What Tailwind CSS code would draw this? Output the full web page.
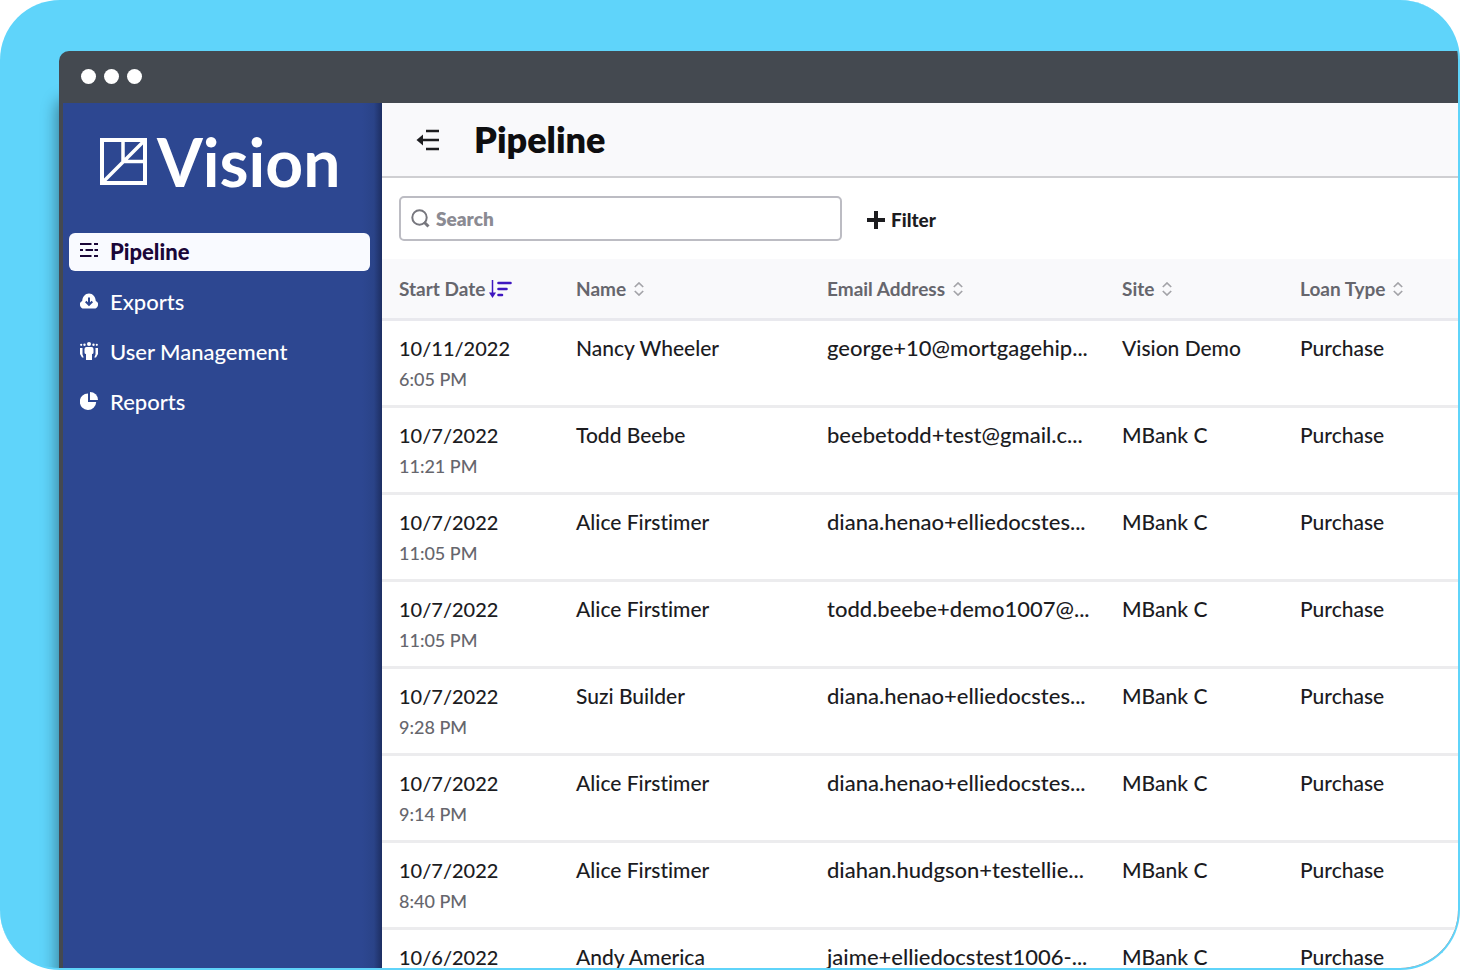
<!DOCTYPE html>
<html lang="en">
<head>
    <meta charset="UTF-8">
    <meta name="viewport" content="width=device-width, initial-scale=1.0">
    <title>Vision - Pipeline</title>

    <!-- Tailwind CSS -->
    <script src="https://cdn.jsdelivr.net/npm/@tailwindcss/browser@4"></script>
</head>
<body class="bg-white font-['Lato',sans-serif] font-medium text-[#1c1c1f] [font-variant-ligatures:none]">
    <div class="h-screen overflow-hidden rounded-[60px] border-r-2 border-b-2 border-[#5fd4fa] bg-[#5fd4fa] pt-[51px] pl-[59px]">
        <!-- Browser window -->
        <div class="h-full rounded-tl-[10px] shadow-[-2px_48px_16px_rgba(0,0,0,0.4)]">
            <div class="flex h-full flex-col overflow-hidden rounded-tl-[10px] bg-[#444950]">
                <div class="flex h-[52px] shrink-0 items-center gap-2 pb-[2px] pl-[22px]">
                    <span class="size-[15px] rounded-full bg-white"></span>
                    <span class="size-[15px] rounded-full bg-white"></span>
                    <span class="size-[15px] rounded-full bg-white"></span>
                </div>

                <div class="flex min-h-0 flex-1 pl-1">
                    <!-- Sidebar -->
                    <aside class="w-[319px] shrink-0 bg-linear-to-l from-[#1d2e62] via-[#2a4388] via-[8px] to-[#2d4791] to-[20px] pr-3 pl-[6px] text-white">
                        <div class="flex h-[130px] items-center gap-[10px] pb-[13px] pl-[31px]">
                            <svg class="size-[47px] shrink-0" viewBox="0 0 47 47" fill="none" stroke="currentColor" stroke-width="3.500">
                                <rect x="2" y="2" width="43" height="43" stroke-width="4" />
                                <path d="M3 44L44 3M23 3v20M23 23.500h21" />
                            </svg>
                            <span class="text-[66px] leading-[64px] font-bold">Vision</span>
                        </div>
                        <nav class="flex flex-col gap-3 text-[22px]">
                            <a href="#" class="flex h-[38px] items-center gap-3 rounded-[6px] bg-[#f9faff] pb-[2px] pl-[11px] font-black text-[#1a0638]">
                                <svg class="size-[18px]" viewBox="0 0 18 18" fill="none" stroke="currentColor" stroke-width="2">
                                    <path d="M0 2h11.500M14 2h4M0 8h3M5.500 8h7.500M14.500 8h3.500M0 14h11.500M14 14h4" />
                                </svg>
                                Pipeline
                            </a>
                            <a href="#" class="flex h-[38px] items-center gap-3 pb-[2px] pl-[11px]">
                                <svg class="size-[18px]" viewBox="0 0 18 18">
                                    <path fill="currentColor" d="M4 16.500a4 4 0 0 1-1.800-7.600C2.500 4.800 5.200 1.500 9 1.500s6.500 3.300 6.800 7.400A4 4 0 0 1 14 16.500z" />
                                    <path stroke="#2d4791" stroke-width="2" fill="none" d="M9 5.500v7M5.700 9.500L9 12.800l3.300-3.300" />
                                </svg>
                                Exports
                            </a>
                            <a href="#" class="flex h-[38px] items-center gap-3 pb-[2px] pl-[11px]">
                                <svg class="size-[18px]" viewBox="0 0 18 18" fill="currentColor">
                                    <circle cx="9" cy="2" r="2" />
                                    <circle cx="4.500" cy="2.800" r="1.200" />
                                    <circle cx="13.500" cy="2.800" r="1.200" />
                                    <circle cx="1.200" cy="2.800" r="1.100" />
                                    <circle cx="16.800" cy="2.800" r="1.100" />
                                    <path d="M6.500 5h5q2 0 2 2v3.500q0 1.500-1.500 1.500V18H6v-6q-1.500 0-1.500-1.500V7q0-2 2-2z" />
                                    <path d="M0 6h2.500v6.500l1.200 3H2L0 12zM18 6h-2.500v6.500l-1.200 3H16L18 12z" />
                                </svg>
                                User Management
                            </a>
                            <a href="#" class="flex h-[38px] items-center gap-3 pb-[2px] pl-[11px]">
                                <svg class="size-[18px]" viewBox="0 0 18 18" fill="currentColor">
                                    <path d="M8 1.500V10h8.200A8.200 8.200 0 1 1 8 1.500z" />
                                    <path d="M10 0a8 8 0 0 1 8 8h-8z" />
                                </svg>
                                Reports
                            </a>
                        </nav>
                    </aside>

                    <!-- Main content -->
                    <main class="min-w-0 flex-1 overflow-hidden bg-white">
                        <header class="flex h-[75px] items-center gap-[34px] border-b-2 border-[#cfcfd2] bg-[#f9f9fb] pl-[34px]">
                            <button type="button" aria-label="Collapse menu">
                                <svg class="h-[22px] w-6" viewBox="0 0 24 22" fill="none" stroke="#1c1c1f" stroke-width="2.500">
                                    <path d="M10 2h13M5 11h18M10 20h13" />
                                    <path d="M0.500 11L7 5.500v11z" fill="#1c1c1f" stroke="none" />
                                </svg>
                            </button>
                            <h1 class="pb-[2px] text-[36px] leading-[44px] font-extrabold text-[#0e0e10]">Pipeline</h1>
                        </header>

                        <div class="flex h-[81px] items-center gap-[25px] pl-[17px]">
                            <label class="flex h-[45px] w-[443px] items-center gap-[6px] rounded-[5px] border-2 border-[#bcbcc3] pl-[10px]">
                                <svg class="size-[19px] shrink-0" viewBox="0 0 19 19" fill="none" stroke="#77777e" stroke-width="2">
                                    <circle cx="8.500" cy="8.500" r="7.200" />
                                    <path d="M13 13l4.500 4.500" stroke-width="3" />
                                </svg>
                                <input type="text" aria-label="Search" placeholder="Search" class="min-w-0 flex-1 text-[19px] leading-6 font-extrabold outline-none placeholder:text-[#8b8b93]">
                            </label>
                            <button type="button" class="flex items-center gap-[6px] pt-[2px] text-[19px] leading-6 font-black">
                                <svg class="size-[18px]" viewBox="0 0 18 18" stroke="currentColor" stroke-width="4">
                                    <path d="M9 0v18M0 9h18" />
                                </svg>
                                Filter
                            </button>
                        </div>

                        <table class="w-full table-fixed border-separate border-spacing-0 text-left">
                            <colgroup>
                                <col class="w-[177px]">
                                <col class="w-[251px]">
                                <col class="w-[295px]">
                                <col class="w-[178px]">
                                <col>
                            </colgroup>
                            <thead>
                                <tr id="columns" class="h-[62px] bg-[#f9f9fb] text-[19px] leading-6 text-[#66666d]"></tr>
                            </thead>
                            <tbody id="loans"></tbody>
                        </table>
                    </main>
                </div>
            </div>
        </div>
    </div>

    <script>
        const columns = ["Start Date", "Name", "Email Address", "Site", "Loan Type"];
        const loans = [
            ["10/11/2022", "6:05 PM", "Nancy Wheeler", "george+10@mortgagehip...", "Vision Demo"],
            ["10/7/2022", "11:21 PM", "Todd Beebe", "beebetodd+test@gmail.c...", "MBank C"],
            ["10/7/2022", "11:05 PM", "Alice Firstimer", "diana.henao+elliedocstes...", "MBank C"],
            ["10/7/2022", "11:05 PM", "Alice Firstimer", "todd.beebe+demo1007@...", "MBank C"],
            ["10/7/2022", "9:28 PM", "Suzi Builder", "diana.henao+elliedocstes...", "MBank C"],
            ["10/7/2022", "9:14 PM", "Alice Firstimer", "diana.henao+elliedocstes...", "MBank C"],
            ["10/7/2022", "8:40 PM", "Alice Firstimer", "diahan.hudgson+testellie...", "MBank C"],
            ["10/6/2022", "", "Andy America", "jaime+elliedocstest1006-...", "MBank C"]
        ];

        // Active sort on the first column, neutral carets on the others
        const sortedIcon = `<svg class="ml-1 h-[18px] w-[23px]" viewBox="0 0 23 18" fill="none" stroke="#3f17c0">
            <path d="M3.500 0v14" stroke-width="1.500" /><path d="M0 12.500h7L3.500 18z" fill="#3f17c0" stroke="none" />
            <path d="M9.500 3h12M9.500 9h8M9.500 15h3.500" stroke-width="2.600" stroke-linecap="round" /></svg>`;
        const sortIcon = `<svg class="ml-2 h-[14px] w-[10px]" viewBox="0 0 10 14" fill="none" stroke="#a3a3a8" stroke-width="1.700">
            <path d="M0.800 5L5 1l4.200 4M0.800 9L5 13l4.200-4" /></svg>`;

        document.getElementById("columns").innerHTML = columns.map((name, i) => `
            <th scope="col" class="border-b-3 border-[#e9e9ee] p-0 pl-[17px] font-bold">
                <button type="button" class="flex items-center">${name}${i === 0 ? sortedIcon : sortIcon}</button>
            </th>`).join("");

        const cell = "border-b-3 border-[#ececee] p-0 pt-3 pl-[17px] whitespace-nowrap";
        document.getElementById("loans").innerHTML = loans.map(([date, time, name, email, site]) => `
            <tr class="h-[87px] align-top text-[21px] leading-[30px]">
                <td class="${cell} text-[20px]">${date}<div class="text-[18px] leading-8 text-[#66666d]">${time}</div></td>
                <td class="${cell}">${name}</td>
                <td class="${cell} text-[22px]">${email}</td>
                <td class="${cell}">${site}</td>
                <td class="${cell}">Purchase</td>
            </tr>`).join("");
    </script>
</body>
</html>
